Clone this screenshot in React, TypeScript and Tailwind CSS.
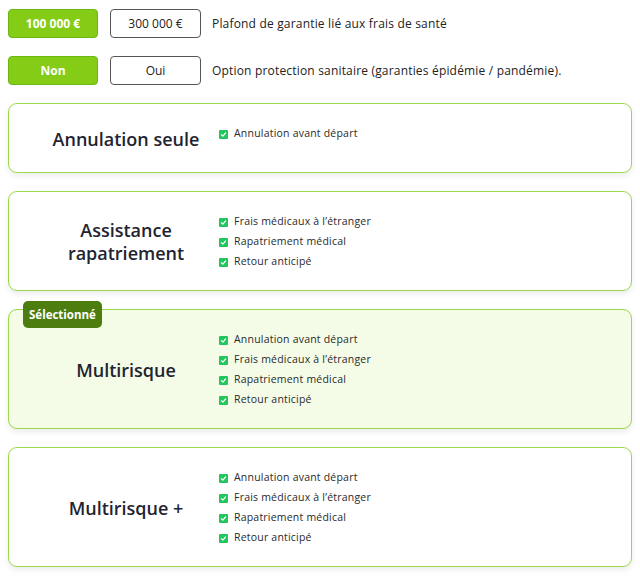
import React from "react";

const Check = () => (
  <span className="flex h-[9px] w-[9px] shrink-0 items-center justify-center rounded-[1px] bg-[#22c55e]">
    <svg viewBox="0 0 10 10" className="h-[7px] w-[7px]" fill="none" stroke="white" strokeWidth="1.8" strokeLinecap="round" strokeLinejoin="round">
      <path d="M2 5.2 L4.2 7.3 L8 2.8" />
    </svg>
  </span>
);

type Plan = { title: string[]; items: string[]; selected?: boolean };

const plans: Plan[] = [
  { title: ["Annulation seule"], items: ["Annulation avant départ"] },
  { title: ["Assistance", "rapatriement"], items: ["Frais médicaux à l’étranger", "Rapatriement médical", "Retour anticipé"] },
  { title: ["Multirisque"], items: ["Annulation avant départ", "Frais médicaux à l’étranger", "Rapatriement médical", "Retour anticipé"], selected: true },
  { title: ["Multirisque +"], items: ["Annulation avant départ", "Frais médicaux à l’étranger", "Rapatriement médical", "Retour anticipé"] },
];

function Toggle({ a, b, label }: { a: string; b: string; label: string }) {
  return (
    <div className="flex items-center">
      <button className="h-[29px] w-[90px] rounded-[4px] border border-[#6bb814] bg-[#84cc16] text-[12px] font-bold text-white">{a}</button>
      <button className="ml-[12px] h-[29px] w-[91px] rounded-[4px] border border-[#555] bg-white text-[12px] text-[#222]">{b}</button>
      <span className="ml-[11px] text-[12px] tracking-[0.015em] text-[#222]">{label}</span>
    </div>
  );
}

export default function App() {
  return (
    <div className="min-h-[580px] w-[640px] bg-white px-[8px] pt-[9px]" style={{ fontFamily: '"Open Sans", "Noto Sans", sans-serif' }}>
      <div className="flex flex-col gap-[18px]">
        <Toggle a="100 000 €" b="300 000 €" label="Plafond de garantie lié aux frais de santé" />
        <Toggle a="Non" b="Oui" label="Option protection sanitaire (garanties épidémie / pandémie)." />
      </div>
      <div className="mt-[18px] flex w-[624px] flex-col gap-[18px]">
        {plans.map((p, i) => (
          <div
            key={i}
            className={`relative flex min-h-[70px] rounded-[9px] border-[1.5px] border-[#9bd94a] pb-[18px] pt-[20px] shadow-[0_3px_6px_rgba(0,0,0,0.08)] ${p.selected ? "bg-[#f4fce8]" : "bg-white"}`}
          >
            {p.selected && (
              <span className="absolute left-[14px] top-[-9px] rounded-[5px] bg-[#4d7c0f] px-[6px] py-[5px] text-[11.5px] font-bold leading-[17px] text-white">
                Sélectionné
              </span>
            )}
            <div className="flex w-[210px] shrink-0 flex-col items-center justify-center self-center pl-[24px] text-center text-[18px] font-semibold leading-[23px] text-[#1f2430]">
              {p.title.map((t) => (
                <span key={t}>{t}</span>
              ))}
            </div>
            <ul className="flex flex-col self-start">
              {p.items.map((it) => (
                <li key={it} className="flex h-[20px] items-center gap-[6px] text-[10.5px] tracking-[0.02em] text-[#2a2a2a]">
                  <Check />
                  <span>{it}</span>
                </li>
              ))}
            </ul>
          </div>
        ))}
      </div>
    </div>
  );
}
